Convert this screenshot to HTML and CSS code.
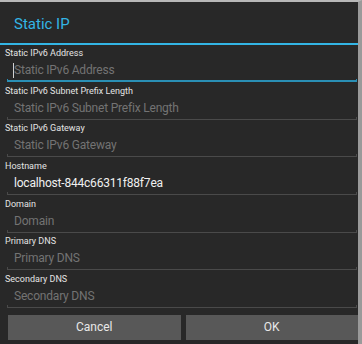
FILE: index.html
```html
<!DOCTYPE html>
<html>
<head>
<meta charset="utf-8">
<link rel="stylesheet" href="styles.css">
</head>
<body>
<div class="dialog">
  <div class="title">Static IP</div>
  <div class="title-rule"></div>
  <div class="form">
    <div class="row">
      <div class="label">Static IPv6 Address</div>
      <div class="field placeholder focused"><span class="cursor"></span>Static IPv6 Address</div>
      <div class="line focus"></div>
    </div>
    <div class="row">
      <div class="label">Static IPv6 Subnet Prefix Length</div>
      <div class="field placeholder">Static IPv6 Subnet Prefix Length</div>
      <div class="line"></div>
    </div>
    <div class="row">
      <div class="label">Static IPv6 Gateway</div>
      <div class="field placeholder">Static IPv6 Gateway</div>
      <div class="line"></div>
    </div>
    <div class="row">
      <div class="label">Hostname</div>
      <div class="field value">localhost-844c66311f88f7ea</div>
      <div class="line"></div>
    </div>
    <div class="row">
      <div class="label">Domain</div>
      <div class="field placeholder">Domain</div>
      <div class="line"></div>
    </div>
    <div class="row">
      <div class="label">Primary DNS</div>
      <div class="field placeholder">Primary DNS</div>
      <div class="line"></div>
    </div>
    <div class="row">
      <div class="label">Secondary DNS</div>
      <div class="field placeholder">Secondary DNS</div>
      <div class="line"></div>
    </div>
  </div>
  <div class="buttons">
    <div class="btn">Cancel</div>
    <div class="btn">OK</div>
  </div>
</div>
</body>
</html>
```
FILE: styles.css
```css
html, body {
  margin: 0;
  padding: 0;
  background: #282828;
}
body {
  width: 362px;
  height: 344px;
  overflow: hidden;
  font-family: Roboto, "Noto Sans", sans-serif;
}
.dialog {
  width: 358px;
  height: 342px;
  border-top: 2px solid #b8b8b8;
  border-right: 4px solid #9a9a9a;
  background: #282828;
  display: flex;
  flex-direction: column;
}
.title {
  box-sizing: border-box;
  height: 41px;
  padding-top: 4px;
  line-height: 37px;
  padding-left: 14px;
  font-size: 15px;
  color: #33b5e5;
}
.title-rule {
  height: 2px;
  background: #33b5e5;
}
.form {
  display: flex;
  flex-direction: column;
}
.row {
  height: 37.67px;
  display: flex;
  flex-direction: column;
}
.label {
  height: 13px;
  line-height: 13px;
  padding-left: 5px;
  padding-top: 2px;
  font-size: 9px;
  color: #e4e4e4;
}
.field {
  box-sizing: border-box;
  height: 19px;
  padding-top: 2px;
  line-height: 17px;
  padding-left: 14px;
  font-size: 12px;
  letter-spacing: -0.2px;
  display: flex;
  align-items: center;
}
.placeholder {
  color: #737373;
}
.value {
  color: #f0f0f0;
}
.cursor {
  width: 1px;
  height: 15px;
  background: #d0d0d0;
  margin-left: -1px;
  margin-right: 0;
}
.line {
  margin: 0 1px 0 7px;
  height: 2px;
  border-left: 1px solid #4a4a4a;
  border-right: 1px solid #4a4a4a;
  border-bottom: 1px solid #4a4a4a;
}
.line.focus {
  border-color: #2a8fb5;
  border-bottom: 2px solid #2a8fb5;
  height: 1px;
}
.buttons {
  display: flex;
  gap: 5px;
  padding-left: 8px;
  margin-top: 6px;
}
.btn {
  flex: 1;
  height: 25px;
  line-height: 25px;
  text-align: center;
  background: #585858;
  color: #e8e8e8;
  font-size: 12px;
}
```
